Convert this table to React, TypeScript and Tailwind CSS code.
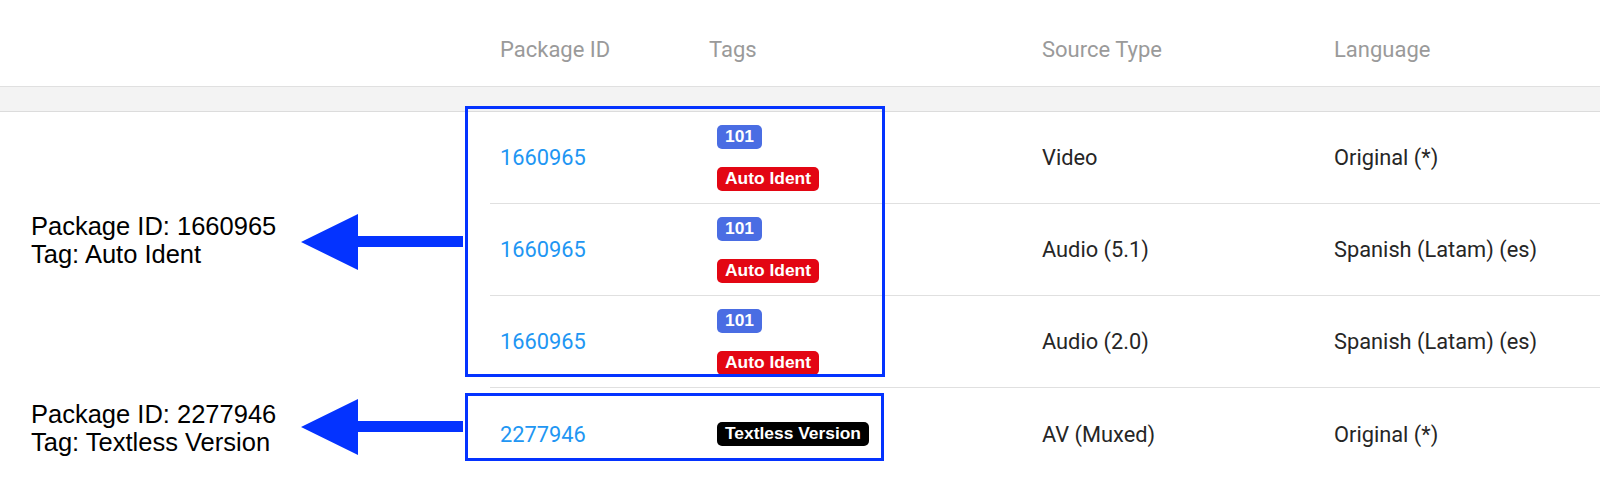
const rows = [
  { id: "1660965", tags: ["101", "Auto Ident"], source: "Video", language: "Original (*)" },
  { id: "1660965", tags: ["101", "Auto Ident"], source: "Audio (5.1)", language: "Spanish (Latam) (es)" },
  { id: "1660965", tags: ["101", "Auto Ident"], source: "Audio (2.0)", language: "Spanish (Latam) (es)" },
  { id: "2277946", tags: ["Textless Version"], source: "AV (Muxed)", language: "Original (*)" },
];

function Tag({ label }: { label: string }) {
  const color =
    label === "101"
      ? "bg-[#4a6de3]"
      : label === "Auto Ident"
        ? "bg-[#e30613]"
        : "bg-black";
  return (
    <span
      className={`inline-flex h-[24px] items-center rounded-[5px] px-[8px] text-[17.4px] font-bold leading-none text-white ${color}`}
      style={{ fontFamily: '"Liberation Sans", Arial, sans-serif' }}
    >
      {label}
    </span>
  );
}

function Arrow({ className }: { className: string }) {
  return (
    <svg
      className={`absolute ${className}`}
      width="162"
      height="60"
      viewBox="0 0 162 60"
      aria-hidden
    >
      <polygon points="0,30 57,2 57,24 162,24 162,35 57,35 57,58" fill="#0433ff" />
    </svg>
  );
}

function Note({ lines, className }: { lines: string[]; className: string }) {
  return (
    <div
      className={`absolute left-[31px] text-[25.5px] leading-[28px] text-black ${className}`}
      style={{ fontFamily: '"Liberation Sans", Arial, sans-serif' }}
    >
      {lines.map((l) => (
        <div key={l}>{l}</div>
      ))}
    </div>
  );
}

export default function App() {
  return (
    <div
      className="relative h-[497px] w-[1600px] overflow-hidden bg-white"
      style={{ fontFamily: "Roboto, sans-serif" }}
    >
      <div className="flex h-[87px] items-center border-b border-[#e0e0e0] pt-[12px]">
        <div className="ml-[490px] grid flex-1 grid-cols-[218px_334px_292px_1fr] text-[22px] text-[#9a9a9a]">
          <div className="pl-[10px]">Package ID</div>
          <div className="pl-[1px]">Tags</div>
          <div>Source Type</div>
          <div>Language</div>
        </div>
      </div>
      <div className="h-[25px] border-b border-[#dcdcdc] bg-[#f3f3f3]" />

      <div className="ml-[490px]">
        {rows.map((r, i) => (
          <div
            key={i}
            className={`grid h-[92px] grid-cols-[218px_334px_292px_1fr] items-center text-[21.8px] text-[#262626] ${
              i < rows.length - 1 ? "border-b border-[#e0e0e0]" : ""
            }`}
          >
            <div className="pl-[10px] pt-[2px] text-[#2196f3]">{r.id}</div>
            <div className="flex flex-col items-start gap-[18px] pl-[9px]">
              {r.tags.map((t) => (
                <Tag key={t} label={t} />
              ))}
            </div>
            <div className="pt-[2px]">{r.source}</div>
            <div className="pt-[2px]">{r.language}</div>
          </div>
        ))}
      </div>

      {/* annotation overlay */}
      <div className="absolute left-[465px] top-[106px] h-[271px] w-[420px] border-[3px] border-[#0433ff]" />
      <div className="absolute left-[465px] top-[393px] h-[68px] w-[419px] border-[3px] border-[#0433ff]" />
      <Arrow className="left-[301px] top-[212px]" />
      <Arrow className="left-[301px] top-[397px]" />
      <Note className="top-[212px]" lines={["Package ID: 1660965", "Tag: Auto Ident"]} />
      <Note className="top-[400px]" lines={["Package ID: 2277946", "Tag: Textless Version"]} />
    </div>
  );
}
